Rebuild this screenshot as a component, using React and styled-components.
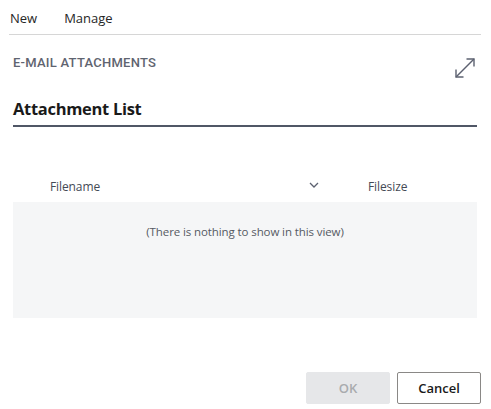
import React from "react";
import styled, { createGlobalStyle } from "styled-components";

const Global = createGlobalStyle`
  html, body { margin: 0; padding: 0; background: #fff; }
  body { font-family: "Open Sans", "Noto Sans", sans-serif; color: #212121; }
  * { box-sizing: border-box; }
`;

const Page = styled.div`
  width: 491px;
  height: 409px;
  display: flex;
  flex-direction: column;
  padding: 0 10px 0 9px;
`;

const Toolbar = styled.div`
  display: flex;
  align-items: center;
  gap: 27px;
  height: 35px;
  padding-left: 1px;
  padding-top: 1px;
  border-bottom: 1px solid #d6d6d6;
`;

const ToolItem = styled.span`
  font-size: 13px;
  color: #262626;
`;

const Content = styled.div`
  display: flex;
  flex-direction: column;
  padding: 0 4px;
  flex: 1;
`;

const CaptionRow = styled.div`
  display: flex;
  justify-content: space-between;
  align-items: flex-start;
  margin-top: 19px;
`;

const Caption = styled.div`
  font-family: "Roboto", sans-serif;
  font-weight: 500;
  font-size: 13px;
  letter-spacing: 0.25px;
  color: #5f6470;
  line-height: 18px;
`;

const ExpandIcon = styled.svg`
  margin-top: 3px;
  margin-right: 1px;
`;

const Title = styled.div`
  margin-top: 19px;
  font-size: 16.5px;
  font-weight: 700;
  color: #1a1a1a;
  line-height: 22px;
  padding-bottom: 5px;
  border-bottom: 2px solid #505766;
  letter-spacing: -0.3px;
`;

const HeaderRow = styled.div`
  display: grid;
  grid-template-columns: 37px 260px 58px 1fr;
  align-items: center;
  height: 22px;
  margin-top: 48px;
  margin-bottom: 5px;
`;

const HeadCell = styled.span`
  font-size: 12px;
  color: #444a55;
  letter-spacing: -0.1px;
`;

const Chevron = styled.svg`
  justify-self: start;
  margin-left: -1px;
  margin-top: -3px;
`;

const Grid = styled.div`
  height: 116px;
  background: #f5f6f7;
  display: flex;
  justify-content: center;
  padding-top: 21px;
`;

const Empty = styled.span`
  font-size: 11.5px;
  color: #555a63;
  line-height: 17px;
  letter-spacing: -0.1px;
`;

const Footer = styled.div`
  display: flex;
  justify-content: flex-end;
  gap: 7px;
  margin-top: 54px;
  margin-right: -4px;
`;

const Button = styled.button`
  width: 84px;
  height: 32px;
  font-family: "Open Sans", "Noto Sans", sans-serif;
  font-size: 13px;
  font-weight: 600;
  border-radius: 2px;
  background: ${(p) => (p.$disabled ? "#e6e7e9" : "#fff")};
  color: ${(p) => (p.$disabled ? "#a9abae" : "#1a1a1a")};
  border: 1px solid ${(p) => (p.$disabled ? "#e6e7e9" : "#8a8886")};
  padding: 0;
`;

export default function App() {
  return (
    <>
      <Global />
      <Page>
        <Toolbar>
          <ToolItem>New</ToolItem>
          <ToolItem>Manage</ToolItem>
        </Toolbar>
        <Content>
          <CaptionRow>
            <Caption>E-MAIL ATTACHMENTS</Caption>
            <ExpandIcon width="22" height="22" viewBox="0 0 22 22" fill="none" stroke="#5c6170" strokeWidth="1.4">
              <path d="M2 20 L20 2" />
              <path d="M12.5 2 H20 V9.5" />
              <path d="M2 12.5 V20 H9.5" />
            </ExpandIcon>
          </CaptionRow>
          <Title>Attachment List</Title>
          <HeaderRow>
            <span />
            <HeadCell>Filename</HeadCell>
            <Chevron width="10" height="6" viewBox="0 0 10 6" fill="none" stroke="#5c6170" strokeWidth="1.3">
              <path d="M1 1 L5 5 L9 1" />
            </Chevron>
            <HeadCell>Filesize</HeadCell>
          </HeaderRow>
          <Grid>
            <Empty>(There is nothing to show in this view)</Empty>
          </Grid>
          <Footer>
            <Button $disabled>OK</Button>
            <Button>Cancel</Button>
          </Footer>
        </Content>
      </Page>
    </>
  );
}
